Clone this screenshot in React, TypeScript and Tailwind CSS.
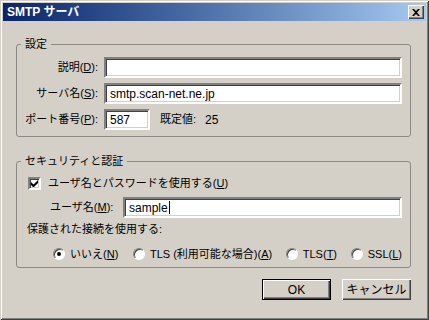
import React from "react";

const font = { fontFamily: '"Liberation Sans", "Noto Sans CJK JP", sans-serif' };

function Input({ value, w, caret }: { value?: string; w?: string; caret?: boolean }) {
  return (
    <div
      className={`h-[21px] bg-white border-2 border-t-[#808080] border-l-[#808080] border-b-white border-r-white shadow-[inset_1px_1px_0_#404040,inset_-1px_-1px_0_#d4d0c8] flex items-center pl-[4px] text-[12px] text-black whitespace-nowrap ${w ?? "flex-1"}`}
    >
      <span>{value}</span>
      {caret && <span className="w-px h-[13px] bg-black ml-px" />}
    </div>
  );
}

function Radio({ checked }: { checked?: boolean }) {
  return (
    <span className="w-[12px] h-[12px] rounded-full bg-white border border-t-[#808080] border-l-[#808080] border-b-[#ffffff] border-r-[#ffffff] shadow-[inset_1px_1px_0_#404040] flex items-center justify-center shrink-0">
      {checked && <span className="w-[4px] h-[4px] rounded-full bg-black" />}
    </span>
  );
}

function Button({ children, def }: { children: React.ReactNode; def?: boolean }) {
  return (
    <div
      className={`w-[69px] h-[21px] flex items-center justify-center text-[12px] text-black bg-[#d4d0c8] whitespace-nowrap ${
        def
          ? "border border-black shadow-[inset_1px_1px_0_#ffffff,inset_-1px_-1px_0_#404040,inset_-2px_-2px_0_#808080]"
          : "shadow-[inset_1px_1px_0_#ffffff,inset_-1px_-1px_0_#404040,inset_-2px_-2px_0_#808080]"
      }`}
    >
      {children}
    </div>
  );
}

export default function App() {
  return (
    <div
      style={font}
      className="w-[429px] h-[320px] bg-[#d4d0c8] p-[3px] shadow-[inset_1px_1px_0_#d4d0c8,inset_-1px_-1px_0_#404040,inset_2px_2px_0_#ffffff,inset_-2px_-2px_0_#808080] text-[11px] text-black flex flex-col whitespace-nowrap"
    >
      {/* Title bar */}
      <div className="h-[18px] shrink-0 bg-gradient-to-r from-[#0a246a] to-[#a6caf0] flex items-center justify-between pl-[4px] pr-[2px]">
        <span className="text-white font-bold text-[12px] leading-none">SMTP サーバ</span>
        <div className="w-[16px] h-[14px] bg-[#d4d0c8] shadow-[inset_1px_1px_0_#ffffff,inset_-1px_-1px_0_#404040,inset_-2px_-2px_0_#808080] flex items-center justify-center">
          <svg width="8" height="7" viewBox="0 0 8 7">
            <path d="M0 0h2l2 2 2-2h2L5 3.5 8 7H6L4 5 2 7H0l3-3.5z" fill="#000" />
          </svg>
        </div>
      </div>

      {/* Group 1 */}
      <fieldset className="mt-[16px] ml-[13px] w-[395px] border border-[#8c8a85] rounded-[3px] pl-0 pr-[8px] pt-[6px] pb-[6px] m-0 min-w-0 shrink-0">
        <legend className="ml-[4px] px-[4px] h-[14px] leading-[14px]">設定</legend>
        <div className="flex flex-col gap-[5px]">
          <div className="flex items-center">
            <span className="w-[81px] text-right">
              説明(<u>D</u>):
            </span>
            <div className="w-[6px]" />
            <Input />
          </div>
          <div className="flex items-center">
            <span className="w-[81px] text-right">
              サーバ名(<u>S</u>):
            </span>
            <div className="w-[6px]" />
            <Input value="smtp.scan-net.ne.jp" />
          </div>
          <div className="flex items-center">
            <span className="w-[81px] text-right">
              ポート番号(<u>P</u>):
            </span>
            <div className="w-[6px]" />
            <Input value="587" w="w-[46px]" />
            <span className="ml-[10px]">既定値:</span>
            <span className="ml-[9px] text-[12px]">25</span>
          </div>
        </div>
      </fieldset>

      {/* Group 2 */}
      <fieldset className="mt-[17px] ml-[13px] w-[395px] border border-[#8c8a85] rounded-[3px] pl-0 pr-[8px] pt-[7px] pb-[5px] m-0 min-w-0 shrink-0">
        <legend className="ml-[4px] px-[4px] h-[14px] leading-[14px]">セキュリティと認証</legend>
        <div className="flex items-center h-[16px] ml-[11px]">
          <span className="w-[13px] h-[13px] bg-white border-2 border-t-[#808080] border-l-[#808080] border-b-white border-r-white shadow-[inset_1px_1px_0_#404040,inset_-1px_-1px_0_#d4d0c8] flex items-center justify-center shrink-0">
            <svg width="7" height="7" viewBox="0 0 7 7">
              <path d="M0 2v3l2 2h1l4-4V0L2.5 4.5z" fill="#000" />
            </svg>
          </span>
          <span className="ml-[7px]">
            ユーザ名とパスワードを使用する(<u>U</u>)
          </span>
        </div>
        <div className="flex items-center mt-[6px]">
          <span className="ml-[33px] w-[73px]">
            ユーザ名(<u>M</u>):
          </span>
          <Input value="sample" caret />
        </div>
        <div className="h-[16px] mt-[3px] ml-[10px] flex items-center">保護された接続を使用する:</div>
        <div className="flex items-center h-[16px] mt-[9px] ml-[36px]">
          <span className="w-[80px] flex items-center gap-[5px]">
            <Radio checked />
            <span>
              いいえ(<u>N</u>)
            </span>
          </span>
          <span className="w-[153px] flex items-center gap-[5px]">
            <Radio />
            <span>
              TLS (利用可能な場合)(<u>A</u>)
            </span>
          </span>
          <span className="w-[65px] flex items-center gap-[5px]">
            <Radio />
            <span>
              TLS(<u>T</u>)
            </span>
          </span>
          <span className="flex items-center gap-[5px]">
            <Radio />
            <span>
              SSL(<u>L</u>)
            </span>
          </span>
        </div>
      </fieldset>

      {/* Buttons */}
      <div className="flex justify-end gap-[11px] mt-[11px] w-[408px]">
        <Button def>OK</Button>
        <Button>キャンセル</Button>
      </div>
    </div>
  );
}
